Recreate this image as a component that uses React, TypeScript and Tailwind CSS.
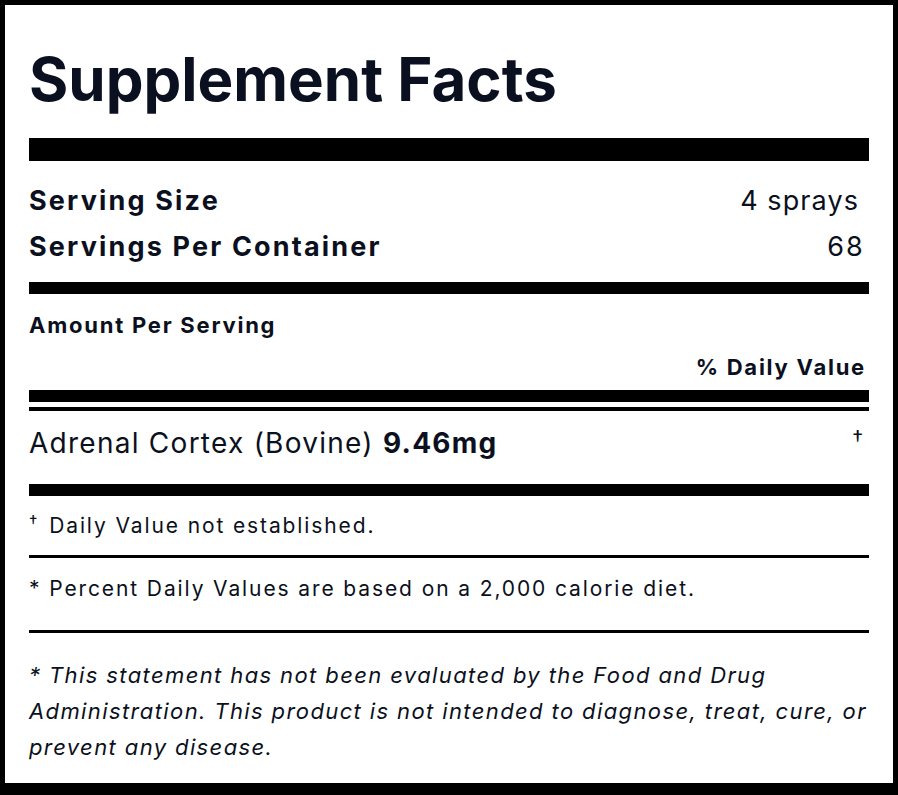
export default function App() {
  return (
    <div className="h-[795px] w-[898px] overflow-hidden border-x-[5px] border-t-[5px] border-b-[12px] border-black bg-white px-[24px] font-['Inter',sans-serif] text-[#0b1020]">
      {/* Title */}
      <h1 className="mt-[44px] text-[60px] font-bold leading-none">
        Supplement Facts
      </h1>
      <div className="mt-[29px] h-[23px] bg-black" />

      {/* Serving info */}
      <div className="mt-[17px] flex items-center justify-between text-[27px] leading-[46px]">
        <span className="font-bold tracking-[0.08em]">Serving Size</span>
        <span className="mr-[10px] tracking-[0.04em]">4 sprays</span>
      </div>
      <div className="flex items-center justify-between text-[27px] leading-[46px]">
        <span className="font-bold tracking-[0.08em]">Servings Per Container</span>
        <span className="mr-[4px] tracking-[0.08em]">68</span>
      </div>
      <div className="mt-[12px] h-[12px] bg-black" />

      {/* Amount header */}
      <div className="mt-[17px] text-[22px] font-bold leading-[28px] tracking-[0.08em]">
        Amount Per Serving
      </div>
      <div className="mt-[14px] pr-[3px] text-right text-[22px] font-bold leading-[28px] tracking-[0.08em]">
        % Daily Value
      </div>
      <div className="mt-[9px] h-[12px] bg-black" />
      <div className="mt-[5px] h-[4px] bg-black" />

      {/* Ingredient */}
      <div className="mt-[14px] flex items-start justify-between">
        <span className="text-[28px] leading-[36px] tracking-[0.045em]">
          Adrenal Cortex (Bovine) <span className="font-bold">9.46mg</span>
        </span>
        <span className="mr-[6px] mt-[2px] text-[22px] leading-[22px]">†</span>
      </div>
      <div className="mt-[23px] h-[12px] bg-black" />

      {/* Footnotes */}
      <p className="mt-[16px] text-[21px] leading-[28px] tracking-[0.09em]">
        <span className="relative -top-[5px] mr-[4px] text-[17px] tracking-normal">†</span> Daily Value not established.
      </p>
      <div className="mt-[14px] h-[3px] bg-black" />
      <p className="mt-[17px] text-[21px] leading-[28px] tracking-[0.09em]">
        * Percent Daily Values are based on a 2,000 calorie diet.
      </p>
      <div className="mt-[27px] h-[3px] bg-black" />
      <p className="mt-[24px] text-[22px] italic leading-[36px] tracking-[0.063em]">
        * This statement has not been evaluated by the Food and Drug
        Administration. This product is not intended to diagnose, treat, cure, or
        prevent any disease.
      </p>
    </div>
  );
}
